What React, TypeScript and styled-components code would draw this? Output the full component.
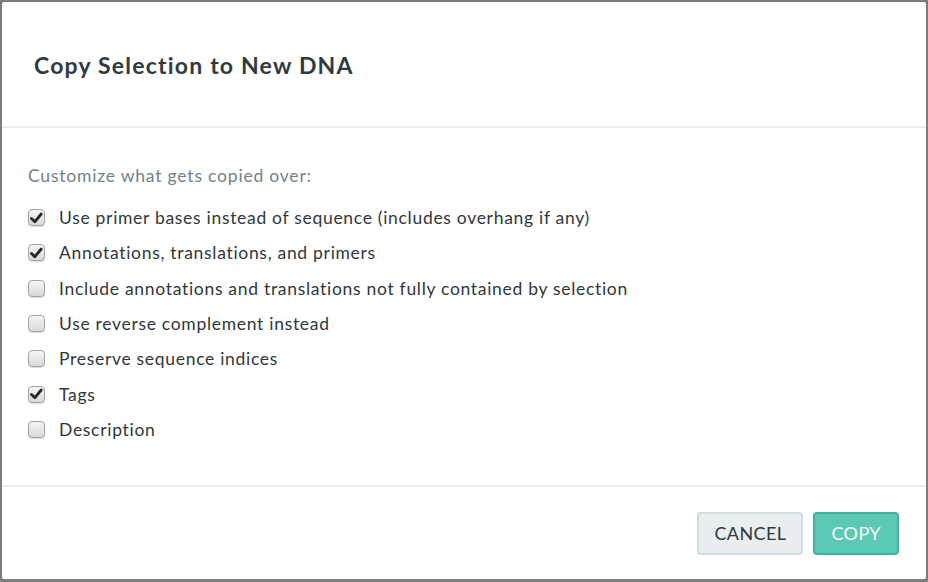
import React from "react";
import styled, { createGlobalStyle } from "styled-components";

const Global = createGlobalStyle`
  html, body { margin: 0; padding: 0; background: #7b7d7e; }
  body { font-family: Lato, "Open Sans", sans-serif; }
  #root { width: 928px; height: 582px; }
`;

const Backdrop = styled.div`
  width: 928px;
  height: 582px;
  box-sizing: border-box;
  padding: 2px 2px 3px 2px;
  background: #7b7d7e;
`;

const Dialog = styled.div`
  width: 100%;
  height: 100%;
  background: #fff;
  border-radius: 2px;
  display: flex;
  flex-direction: column;
  box-sizing: border-box;
`;

const Header = styled.div`
  height: 124px;
  display: flex;
  align-items: center;
  padding: 0 32px;
  border-bottom: 2px solid #e8eef0;
`;

const Title = styled.h2`
  margin: 0;
  font-size: 23px;
  font-weight: 700;
  color: #313b3f;
  letter-spacing: 1.2px;
  padding-top: 1px;
`;

const Body = styled.div`
  flex: 1;
  padding: 37px 26px 0 26px;
  border-bottom: 2px solid #e8eef0;
`;

const Intro = styled.div`
  font-size: 17.5px;
  letter-spacing: 0.8px;
  color: #6f8489;
  margin-bottom: 14px;
`;

const Row = styled.label`
  display: flex;
  align-items: center;
  height: 35.3px;
  font-size: 17.5px;
  letter-spacing: 0.7px;
  color: #2f383b;
`;

const Box = styled.span<{ $checked: boolean }>`
  width: 17px;
  height: 17px;
  box-sizing: border-box;
  border: 1px solid #a3a3a3;
  border-radius: 4px;
  background: linear-gradient(#f5f5f5, #d9d9d9);
  box-shadow: 0 1px 1px rgba(0, 0, 0, 0.14);
  margin-right: 14px;
  display: flex;
  align-items: center;
  justify-content: center;
  flex: none;
`;

const Footer = styled.div`
  height: 92px;
  display: flex;
  justify-content: flex-end;
  align-items: center;
  gap: 10px;
  padding: 0 27px 0 0;
`;

const Button = styled.button<{ $primary?: boolean }>`
  height: 43px;
  padding: 0 ${(p) => (p.$primary ? "16px" : "15px")};
  border-radius: 4px;
  font-family: Lato, "Open Sans", sans-serif;
  font-size: 18px;
  letter-spacing: 0.4px;
  border: 2px solid ${(p) => (p.$primary ? "#47b09c" : "#d0dcdf")};
  background: ${(p) => (p.$primary ? "#5bc9b4" : "#e9eff1")};
  color: ${(p) => (p.$primary ? "#ffffff" : "#2f383b")};
  cursor: pointer;
`;

const Check = () => (
  <svg width="13" height="12" viewBox="0 0 13 12">
    <path d="M1.5 6.5 L4.8 9.8 L11.2 2" fill="none" stroke="#262626" strokeWidth="2.8" strokeLinecap="round" strokeLinejoin="round" />
  </svg>
);

const items: [string, boolean][] = [
  ["Use primer bases instead of sequence (includes overhang if any)", true],
  ["Annotations, translations, and primers", true],
  ["Include annotations and translations not fully contained by selection", false],
  ["Use reverse complement instead", false],
  ["Preserve sequence indices", false],
  ["Tags", true],
  ["Description", false],
];

export default function App() {
  return (
    <>
      <Global />
      <Backdrop>
        <Dialog>
          <Header>
            <Title>Copy Selection to New DNA</Title>
          </Header>
          <Body>
            <Intro>Customize what gets copied over:</Intro>
            {items.map(([label, checked]) => (
              <Row key={label}>
                <Box $checked={checked}>{checked && <Check />}</Box>
                {label}
              </Row>
            ))}
          </Body>
          <Footer>
            <Button>CANCEL</Button>
            <Button $primary>COPY</Button>
          </Footer>
        </Dialog>
      </Backdrop>
    </>
  );
}
